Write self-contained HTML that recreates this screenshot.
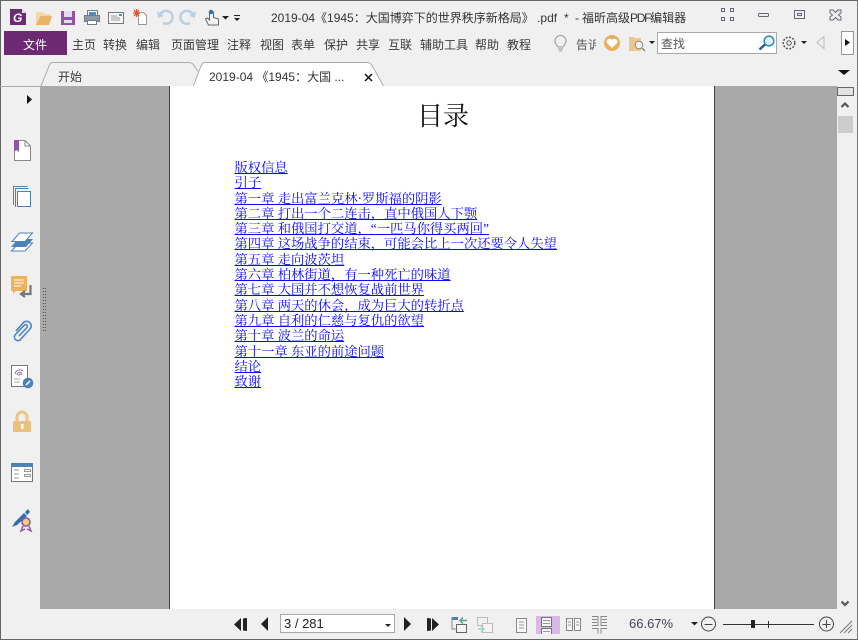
<!DOCTYPE html>
<html><head><meta charset="utf-8"><style>
html,body{margin:0;padding:0;width:858px;height:640px;overflow:hidden;background:#f0f0f0}
body{position:relative;font-family:"Liberation Sans","Noto Sans CJK SC",sans-serif;color:#333}
.a{position:absolute}
.t{position:absolute;font-size:12px;line-height:16px;white-space:nowrap;color:#3a3a3a}
svg{position:absolute;overflow:visible}
.l{position:absolute;left:234.500px;font:13.300px/15px "Liberation Serif","Noto Serif CJK SC",serif;color:#0a0aff;text-decoration:underline;white-space:nowrap}
</style></head><body>
<!-- window frame -->
<div class="a" style="left:0;top:0;width:858px;height:1px;background:#666"></div>
<div class="a" style="left:0;top:0;width:1px;height:640px;background:#666"></div>
<div class="a" style="left:0;top:639px;width:858px;height:1px;background:#666"></div>
<div class="a" style="left:857px;top:0;width:1px;height:640px;background:#777"></div>

<!-- quick access icons -->
<svg style="left:0;top:0" width="300" height="32">
<path d="M10 9h12l4 4v12H10z" fill="#6b2a72"/><path d="M22 9l4 4h-4z" fill="#e8d8ea"/><text x="13" y="22" font-family="Liberation Sans" font-weight="bold" font-style="italic" font-size="12" fill="#fff">G</text>
<path d="M36 25V12h7l2 2h6v3H41l-5 8z" fill="#f3d9a8"/><path d="M36 25l4.500-9H52l-3 9z" fill="#e9b268"/>
<rect x="61" y="11" width="14" height="14" fill="#8e57a6"/><rect x="64" y="11" width="8" height="6" fill="#e6dcec"/><rect x="64" y="20" width="8" height="3" fill="#e6dcec"/>
<rect x="87.500" y="10.500" width="10" height="5" fill="#fff" stroke="#6d7d8a"/><rect x="89" y="12" width="7" height="3" fill="#4a90c8"/><rect x="84.500" y="15.500" width="15" height="6" fill="#8e9aa5" stroke="#6d7d8a"/><rect x="87.500" y="20.500" width="9" height="4" fill="#fff" stroke="#6d7d8a"/>
<rect x="108.500" y="12.500" width="15" height="11" fill="#f6f6f6" stroke="#777"/><path d="M111 16h6M111 18h9M111 20h9" stroke="#999"/><rect x="119" y="14" width="3" height="2" fill="#4a90c8"/>
<path d="M138.500 12.500h5l3 3v9h-8z" fill="#fff" stroke="#999"/><path d="M134 10l5 6M139 10l-5 6M133 13h7M136.500 9v8" stroke="#e2512a" stroke-width="1.200"/>
<path d="M160 15a6.500 6.500 0 1 1 3 8" fill="none" stroke="#b9cfe3" stroke-width="2.500"/><path d="M157 11l1 7 6-2z" fill="#b9cfe3"/>
<path d="M193 15a6.500 6.500 0 1 0-3 8" fill="none" stroke="#b9cfe3" stroke-width="2.500"/><path d="M196 11l-1 7-6-2z" fill="#b9cfe3"/>
<path d="M209.500 12v8l-2-2-2 1 3 6h10v-6l-5-1.500v-5.500z" fill="#f3f3f3" stroke="#666"/><circle cx="211" cy="12" r="2.200" fill="#2f6fb0"/>
<path d="M222 16h7l-3.500 3.500zM234 15h6v1h-6zM234 18h6l-3 3z" fill="#222"/>
</svg>

<!-- title -->
<div class="t" style="left:271px;top:10px;font-size:12px;color:#333">2019-04《1945：大国博弈下的世界秩序新格局》 .pdf</div>
<div class="t" style="left:564px;top:10px;font-size:12px;color:#333">*</div>
<div class="t" style="left:575px;top:10px;font-size:12px;color:#333">-</div>
<div class="t" style="left:582px;top:10px;font-size:12px;color:#333">福昕高级<span style="letter-spacing:-1.300px">PDF</span>编辑器</div>

<!-- window buttons -->
<svg style="left:720px;top:5px" width="130" height="24">
<g fill="none" stroke="#667" stroke-width="1"><rect x="1.500" y="3.500" width="3" height="3"/><rect x="10.500" y="3.500" width="3" height="3"/><rect x="1.500" y="12.500" width="3" height="3"/><rect x="10.500" y="12.500" width="3" height="3"/>
<rect x="38.500" y="8.500" width="10" height="3" rx="1"/><rect x="74.500" y="5.500" width="10" height="8"/><rect x="77.500" y="8.500" width="4" height="2"/>
<path d="M110 5h3l2.500 2.500L118 5h3v3l-2.500 2 2.500 2v3h-3l-2.500-2.500L113 15h-3v-3l2.500-2-2.500-2z"/></g>
</svg>

<!-- menu -->
<div class="a" style="left:4px;top:31px;width:63px;height:24px;background:#6b2a72"></div>
<div class="t" style="left:23px;top:37px;color:#fff">文件</div>
<div class="t" style="left:72px;top:37px">主页</div>
<div class="t" style="left:103px;top:37px">转换</div>
<div class="t" style="left:136px;top:37px">编辑</div>
<div class="t" style="left:171px;top:37px">页面管理</div>
<div class="t" style="left:227px;top:37px">注释</div>
<div class="t" style="left:260px;top:37px">视图</div>
<div class="t" style="left:291px;top:37px">表单</div>
<div class="t" style="left:324px;top:37px">保护</div>
<div class="t" style="left:356px;top:37px">共享</div>
<div class="t" style="left:388px;top:37px">互联</div>
<div class="t" style="left:420px;top:37px">辅助工具</div>
<div class="t" style="left:475px;top:37px">帮助</div>
<div class="t" style="left:507px;top:37px">教程</div>
<svg style="left:551px;top:34px" width="20" height="20"><path d="M7 13c-1-2-3-3-3-6a5.500 5.500 0 0 1 11 0c0 3-2 4-3 6z M7 15h5M8 17h3" fill="none" stroke="#999"/></svg>
<div class="t" style="left:576px;top:37px;width:20px;overflow:hidden;color:#555">告诉</div>
<svg style="left:600px;top:30px" width="60" height="26">
<circle cx="12" cy="13" r="8" fill="#e9ae5e"/><path d="M12 18l-5-5c-2-3 3-6 5-3 2-3 7 0 5 3z" fill="#fff"/>
<path d="M29 21V7h5l1 1h6v13z" fill="#ecc88e"/><circle cx="39" cy="15" r="3.800" fill="#f4f4f4" stroke="#888"/><path d="M42 18l3 3" stroke="#888" stroke-width="1.500"/>
<path d="M49 11h6l-3 3z" fill="#222"/>
</svg>
<div class="a" style="left:657px;top:32px;width:118px;height:20px;background:#fff;border:1px solid #a8a8a8"></div>
<div class="t" style="left:661px;top:36px;font-size:12px;color:#555">查找</div>
<svg style="left:758px;top:34px" width="20" height="20"><circle cx="11" cy="7" r="4.800" fill="#e8f3fa" stroke="#2f8fc0" stroke-width="1.600"/><path d="M7 10.500l-5.500 5" stroke="#2a5f9a" stroke-width="2.500"/></svg>
<svg style="left:782px;top:34px" width="60" height="20">
<circle cx="7" cy="9" r="5.800" fill="none" stroke="#555" stroke-width="1.500" stroke-dasharray="2 1.400"/><circle cx="7" cy="9" r="2.200" fill="none" stroke="#555"/>
<path d="M19 7h6l-3 3z" fill="#222"/><path d="M42 2.500v12l-7-6z" fill="none" stroke="#bbb"/>
</svg>
<div class="a" style="left:841px;top:31px;width:11px;height:22px;background:#fff;border:1px solid #8a9aa8"></div>
<svg style="left:845px;top:39px" width="10" height="10"><path d="M0 0l5 3.500-5 3.500z" fill="#111"/></svg>

<!-- tabs -->
<svg style="left:0;top:60px" width="858" height="28">
<path d="M0 26.500H40M384 26.500H858" stroke="#aaa" fill="none"/>
<path d="M41 26l8-20c1-3 2-3.500 4-3.500h135c3 0 5 1 6 3l4 6" fill="#f0f0f0" stroke="#aaa"/>
<path d="M193 27l8-21c1-3 2-3.500 4-3.500h161c3 0 5 1 6 3l12 21.500z" fill="#fff" stroke="#aaa"/>
<path d="M365 14l7 7M372 14l-7 7" stroke="#111" stroke-width="1.500"/>
<path d="M838 10h12l-6 5z" fill="#111"/>
</svg>
<div class="t" style="left:58px;top:69px">开始</div>
<div class="t" style="left:209px;top:69px;color:#333">2019-04 《1945：大国 ...</div>

<!-- canvas -->
<div class="a" style="left:40px;top:86px;width:797px;height:523px;background:#a9a9a9"></div>
<div class="a" style="left:169px;top:86px;width:546px;height:523px;background:#fff;box-shadow:inset 1px 0 #444,inset -1px 0 #444"></div>
<div class="a" style="left:417px;top:100px;font:26px/34px 'Liberation Serif','Noto Serif CJK SC',serif;color:#111;white-space:nowrap">目录</div>
<a class="l" style="top:160px">版权信息</a>
<a class="l" style="top:175px">引子</a>
<a class="l" style="top:191px">第一章 走出富兰克林·罗斯福的阴影</a>
<a class="l" style="top:206px">第二章 打出一个二连击，直中俄国人下颚</a>
<a class="l" style="top:221px">第三章 和俄国打交道，“一匹马你得买两回”</a>
<a class="l" style="top:236px">第四章 这场战争的结束，可能会比上一次还要令人失望</a>
<a class="l" style="top:252px">第五章 走向波茨坦</a>
<a class="l" style="top:267px">第六章 柏林街道，有一种死亡的味道</a>
<a class="l" style="top:282px">第七章 大国并不想恢复战前世界</a>
<a class="l" style="top:298px">第八章 两天的休会，成为巨大的转折点</a>
<a class="l" style="top:313px">第九章 自利的仁慈与复仇的欲望</a>
<a class="l" style="top:328px">第十章 波兰的命运</a>
<a class="l" style="top:344px">第十一章 东亚的前途问题</a>
<a class="l" style="top:359px">结论</a>
<a class="l" style="top:374px">致谢</a>

<!-- splitter dots -->
<svg style="left:42px;top:288px" width="6" height="46"><path d="M1.500 0v45M3.500 0v45" stroke="#555" stroke-dasharray="1 2" fill="none"/></svg>

<!-- left sidebar -->
<svg style="left:0;top:86px" width="40" height="460">
<path d="M27 9v9l5-4.500z" fill="#111"/>
<!-- page + bookmark -->
<path d="M14.500 54.500h10.500l5.500 5.500v14.500h-16z" fill="#fff" stroke="#888"/><path d="M25 54.500v5.500h5.500" fill="none" stroke="#888"/><path d="M14 54h5v12l-2.500-2-2.500 2z" fill="#8e57a6"/>
<!-- pages -->
<path d="M13.500 119V100.500h14M15.500 121V102.500h13" fill="none" stroke="#4d82b8"/><rect x="17.500" y="105.500" width="13" height="15" fill="#fff" stroke="#4d82b8"/>
<!-- layers -->
<path d="M11.500 165l7.500-8h13.500L25 165z" fill="#fff" stroke="#4d82b8"/><path d="M11 161l7-8h15l-7 8z" fill="#4d82b8"/><path d="M12 155.500l7.500-8.500h13L25 155.500z" fill="#fff" stroke="#4d82b8"/>
<!-- comments -->
<path d="M11 190h16v15H16l-3 3v-3h-2z" fill="#edb25f"/><path d="M14 194h10M14 197h10M14 200h7" stroke="#fff"/><path d="M30.500 199v9H22M25 205l-4 3 4 3" fill="none" stroke="#777" stroke-width="2.200"/>
<!-- clip -->
<path d="M19 250L27 241.500a1.800 1.800 0 0 0-2.500-2.500L15 249a3.600 3.600 0 0 0 5 5L30 243a4.600 4.600 0 0 0-6.500-6.500L16 245" fill="none" stroke="#4d87c0" stroke-width="1.600"/>
<!-- signature doc -->
<rect x="11.500" y="279.500" width="16" height="21" fill="#fff" stroke="#777"/><path d="M15 288a5 5 0 0 1 8-3M17 289a3 3 0 0 1 5-2M19 290a1.500 1.500 0 0 1 3-1" fill="none" stroke="#9b6cb0"/><path d="M14 293h6M14 296h6" stroke="#aaa"/><circle cx="28" cy="297" r="5.300" fill="#4d82b8"/><path d="M26 299l4-4" stroke="#fff" stroke-width="1.500"/>
<!-- lock -->
<path d="M17 335v-4a5 5 0 0 1 10 0v4" fill="none" stroke="#edc488" stroke-width="3"/><rect x="13" y="335" width="18" height="11" rx="1" fill="#ecc07e"/><rect x="21" y="338" width="2.500" height="5" fill="#fff"/>
<!-- form -->
<rect x="11.500" y="377.500" width="21" height="18" fill="#fff" stroke="#777"/><rect x="11" y="377" width="22" height="4" fill="#4d82b8"/><path d="M14 384h5M14 388h5M14 392h5" stroke="#999"/><rect x="24.500" y="383.500" width="6" height="2" fill="none" stroke="#999"/><rect x="24.500" y="388.500" width="6" height="2" fill="none" stroke="#999"/>
<!-- cert -->
<path d="M12 441l3-5 9-9 3 3-10 9zM25 426l3-3 2 3-3 3z" fill="#2f6fb0"/><circle cx="26" cy="436" r="4" fill="#f0d070" stroke="#8e57a6" stroke-width="1.600"/><path d="M23 440l-2 5 4-2M29 440l2 5-4-2" fill="none" stroke="#8e57a6" stroke-width="1.500"/>
</svg>

<!-- right scrollbar -->
<div class="a" style="left:837px;top:86px;width:20px;height:523px;background:#f0f0f0"></div>
<div class="a" style="left:837px;top:87px;width:15px;height:7px;background:#e2e2e2;border:1px solid #666"></div>
<svg style="left:838px;top:100px" width="14" height="10"><path d="M3.500 7l3.500-3.500L10.500 7" fill="none" stroke="#555" stroke-width="2.200"/></svg>
<div class="a" style="left:838px;top:116px;width:15px;height:17px;background:#cdcdcd"></div>
<svg style="left:838px;top:598px" width="14" height="10"><path d="M3.500 3.500L7 7l3.500-3.500" fill="none" stroke="#555" stroke-width="2.200"/></svg>

<!-- status bar -->
<svg style="left:220px;top:609px" width="638" height="30">
<path d="M21 9v13l-7-6.500zM23 9.500l4-.5v13l-4-.5z" fill="#222"/>
<path d="M48 8v14l-7-7z" fill="#222"/>
<path d="M184 8v14l7-7z" fill="#222"/>
<path d="M207 9l4 .5v12l-4 .5zM212 9l7 6.500-7 6.500z" fill="#222"/>
<rect x="232" y="8" width="6" height="3" fill="#4d82b8"/><path d="M232 8v12h6" fill="none" stroke="#888"/><rect x="236.500" y="15.500" width="10" height="8" fill="#f4f4f4" stroke="#666"/><path d="M247 11.500h-7M243 8.500l-3 3 3 3" fill="none" stroke="#5aa090" stroke-width="1.500"/>
<rect x="257.500" y="8.500" width="10" height="8" fill="none" stroke="#bbb"/><rect x="262.500" y="14.500" width="10" height="9" fill="#f4f4f4" stroke="#bbb"/><path d="M258 20h6M261 17l3 3-3 3" fill="none" stroke="#a8cfc4" stroke-width="1.400"/>
<rect x="296.500" y="9.500" width="10" height="14" fill="#f7f7f7" stroke="#888"/><path d="M299 13h5M299 16h5M299 19h5" stroke="#999"/>
<rect x="316" y="7" width="24" height="18" fill="#d8b9e6"/>
<path d="M321.500 8.500h10v9h-10zM321.500 25v-5.500h10V25" fill="#f3f3f3" stroke="#777"/><path d="M323 11.500h7M323 14.500h7M323 22.500h7" stroke="#999"/>
<rect x="346.500" y="9.500" width="6" height="12" fill="#f7f7f7" stroke="#888"/><rect x="354.500" y="9.500" width="6" height="12" fill="#f7f7f7" stroke="#888"/><path d="M348 13h3M348 16h3M356 13h3M356 16h3" stroke="#999"/>
<path d="M372 7.500h6v9h-6M387 7.500h-6v9h6M372 10.500h5M372 13.500h5M382 10.500h5M382 13.500h5M372 19.500h6v5M387 19.500h-6v5" fill="none" stroke="#888"/>
<path d="M471 13h7l-3.500 3.500z" fill="#222"/>
<circle cx="488.500" cy="15" r="7" fill="none" stroke="#444"/><path d="M484.500 15.500h8" stroke="#444"/>
<path d="M503 15.500h91" stroke="#333"/><rect x="531" y="11" width="4" height="8" fill="#222"/><path d="M548.500 12v7" stroke="#333"/>
<circle cx="606.500" cy="15" r="7" fill="none" stroke="#444"/><path d="M602.500 15.500h8M606.500 11v8" stroke="#444"/>
<path d="M620 24l12-12M624 24l8-8M628 24l4-4" stroke="#777" fill="none"/>
</svg>
<div class="a" style="left:280px;top:614px;width:113px;height:17px;background:#fff;border:1px solid #a8a8a8"></div>
<div class="t" style="left:284px;top:616px;font-size:13px;color:#222">3 / 281</div>
<svg style="left:385px;top:624px" width="8" height="5"><path d="M0 0h6l-3 3z" fill="#222"/></svg>
<div class="t" style="left:629px;top:616px;font-size:13px;color:#445">66.67%</div>
</body></html>
